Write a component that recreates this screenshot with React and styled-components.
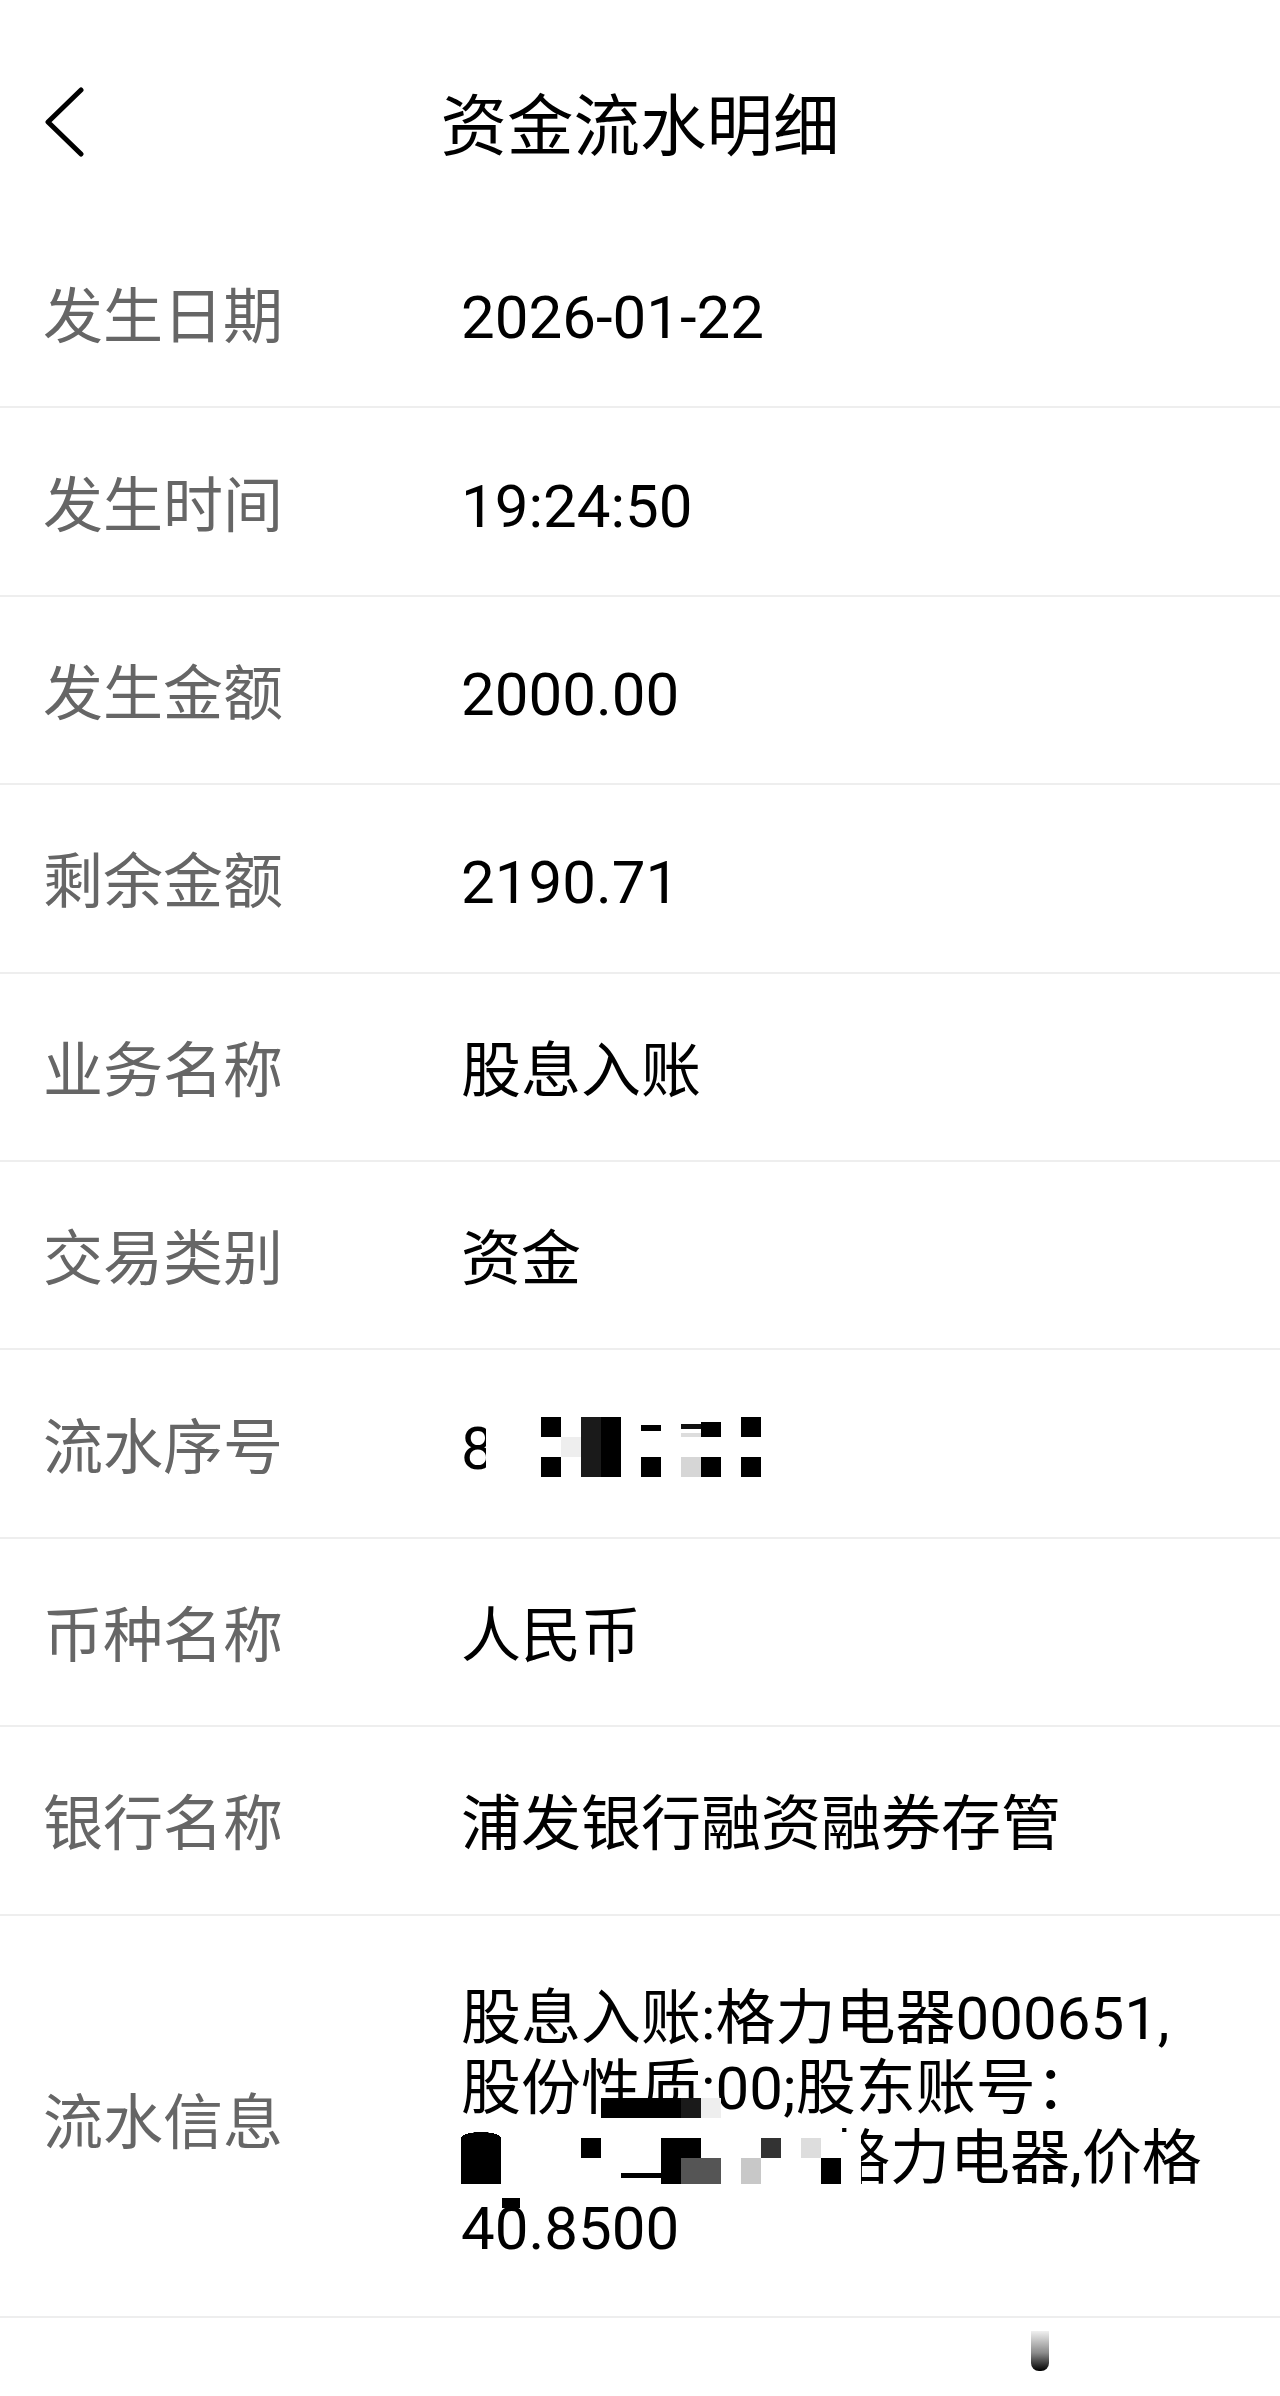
import React from "react";
import styled, { createGlobalStyle } from "styled-components";

const GlobalStyle = createGlobalStyle`
  html, body { margin: 0; padding: 0; background: #ffffff; }
  body { font-family: Roboto, "Noto Sans CJK SC", "Noto Sans", sans-serif; }
  * { box-sizing: border-box; }
`;

const Page = styled.div`
  width: 1280px;
  background: #ffffff;
  color: #000000;
  font-family: Roboto, "Noto Sans CJK SC", sans-serif;
`;

const Header = styled.header`
  display: grid;
  grid-template-columns: 1fr auto 1fr;
  align-items: start;
  height: 220px;
  padding-top: 87px;
`;

const BackButton = styled.button`
  justify-self: start;
  display: flex;
  margin: 0 0 0 45px;
  padding: 0;
  border: 0;
  background: none;
  cursor: pointer;
`;

const Title = styled.h1`
  margin: 0;
  font-size: 66.5px;
  line-height: 80px;
  font-weight: 400;
  color: #000000;
  white-space: nowrap;
`;

const List = styled.div`
  display: flex;
  flex-direction: column;
`;

const Row = styled.div`
  display: flex;
  align-items: center;
  min-height: 188.4px;
  padding-top: ${(p) => (p.$multi ? "68px" : "10px")};
  padding-bottom: ${(p) => (p.$multi ? "52px" : "0")};
  border-bottom: 2px solid #eeeeee;
`;

const Label = styled.div`
  flex: 0 0 461px;
  padding-left: 43px;
  font-size: 60px;
  line-height: 70px;
  color: #666666;
  white-space: nowrap;
`;

const Value = styled.div`
  position: relative;
  flex: 1;
  padding-right: 60px;
  font-size: 60px;
  line-height: 70px;
  color: #000000;
`;

const Line = styled.span`
  position: relative;
  display: block;
  white-space: nowrap;
`;

const Gap = styled.span`
  display: inline-block;
  width: ${(p) => p.$w}px;
`;

const MosaicGrid = styled.div`
  position: absolute;
  left: ${(p) => p.$left}px;
  top: ${(p) => p.$top}px;
  display: grid;
  grid-template-columns: ${(p) => p.$cols};
  grid-template-rows: ${(p) => p.$rows};
  pointer-events: none;
`;

const CELL = {
  ".": "#ffffff",
  _: "transparent",
  K: "#000000",
  D: "#1a1a1a",
  M: "#333333",
  G: "#555555",
  g: "#eeeeee",
  l: "#d6d6d6",
  L: "#c8c8c8",
  d: "#dddddd",
  b: "linear-gradient(#ffffff 0 40%, #000000 40% 70%, #ffffff 70%)",
  a: "linear-gradient(#ffffff 0 35%, #111111 35% 58%, #ffffff 58% 80%, #dddddd 80%)",
  B: "linear-gradient(#ffffff 0 25%, #000000 25%)",
  u: "linear-gradient(#ffffff 0 58%, #000000 58% 78%, #ffffff 78%)",
  P: "radial-gradient(ellipse 100% 100% at 100% 100%, #000000 0 98%, #ffffff 100%)",
  Q: "radial-gradient(ellipse 100% 100% at 0% 100%, #000000 0 98%, #ffffff 100%)",
};

const Cell = styled.span`
  display: block;
  background: ${(p) => CELL[p.$k]};
`;

function Mosaic({ left, top, cols, rows, map }) {
  return (
    <MosaicGrid $left={left} $top={top} $cols={cols} $rows={rows} aria-hidden="true">
      {map.flatMap((r, ri) => r.split("").map((k, ci) => <Cell key={`${ri}-${ci}`} $k={k} />))}
    </MosaicGrid>
  );
}

const Footer = styled.footer`
  display: flex;
  height: 79px;
  padding-top: 13px;
  padding-left: 1031px;
`;

const Bar = styled.span`
  display: block;
  width: 18px;
  height: 40px;
  border-radius: 0 0 8px 8px;
  background: linear-gradient(#f0f0f0, #8a8a8a 55%, #000000);
`;

function Chevron() {
  return (
    <svg width="40" height="70" viewBox="0 0 40 70" fill="none">
      <polyline points="36,3 3,35 36,67" stroke="#000" strokeWidth="5" strokeLinecap="round" strokeLinejoin="round" />
    </svg>
  );
}

const simpleRows = [
  ["发生日期", "2026-01-22"],
  ["发生时间", "19:24:50"],
  ["发生金额", "2000.00"],
  ["剩余金额", "2190.71"],
  ["业务名称", "股息入账"],
  ["交易类别", "资金"],
];

export default function App() {
  return (
    <Page>
      <GlobalStyle />
      <Header>
        <BackButton aria-label="返回">
          <Chevron />
        </BackButton>
        <Title>资金流水明细</Title>
        <span />
      </Header>
      <List>
        {simpleRows.map(([k, v]) => (
          <Row key={k}>
            <Label>{k}</Label>
            <Value>{v}</Value>
          </Row>
        ))}
        <Row>
          <Label>流水序号</Label>
          <Value>
            8
            <Mosaic
              left={25}
              top={3}
              cols="15px repeat(13, 20px)"
              rows="repeat(3, 20px)"
              map={["...K.DK.b.aB.K", "....gDK.......", "...K.DK.K.lK.K"]}
            />
          </Value>
        </Row>
        <Row>
          <Label>币种名称</Label>
          <Value>人民币</Value>
        </Row>
        <Row>
          <Label>银行名称</Label>
          <Value>浦发银行融资融券存管</Value>
        </Row>
        <Row $multi>
          <Label>流水信息</Label>
          <Value>
            <Line>股息入账:格力电器000651,</Line>
            <Line>
              股份性质:00;股东账号：
              <Mosaic left={140} top={44} cols="repeat(6, 20px)" rows="20px" map={["KKKKDg"]} />
            </Line>
            <Line>
              <Gap $w={369} />
              格力电器,价格
              <Mosaic
                left={0}
                top={8}
                cols="repeat(20, 20px)"
                rows="6px 20px 26px"
                map={[
                  "PQ..................",
                  "KK....K...KK...M.d..",
                  "KK......uuKGG.L...K",
                ].map((r) => r.padEnd(20, "."))}
              />
            </Line>
            <Line>
              40.8500
              <Mosaic left={41} top={4} cols="18px" rows="10px" map={["K"]} />
            </Line>
          </Value>
        </Row>
      </List>
      <Footer>
        <Bar />
      </Footer>
    </Page>
  );
}
